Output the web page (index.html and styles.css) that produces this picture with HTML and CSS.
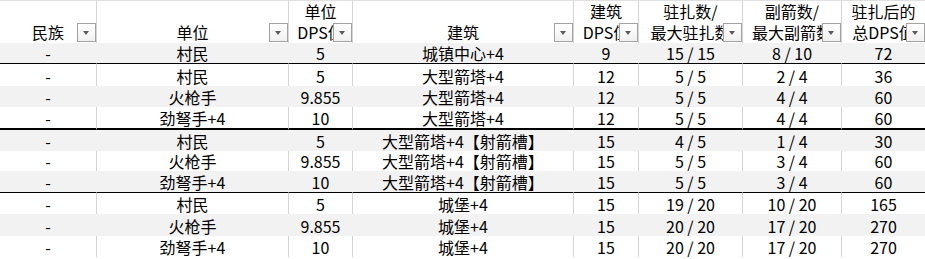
FILE: index.html
```html
<!DOCTYPE html>
<html lang="zh-CN">
<head>
<meta charset="utf-8">
<title>驻扎DPS表</title>
<link rel="stylesheet" href="styles.css">
</head>
<body>
<div class="sheet">
  <div class="row head">
    <div class="c"><span class="lbl">民族</span><span class="filter"></span></div>
    <div class="c"><span class="lbl">单位</span><span class="filter"></span></div>
    <div class="c"><span class="lbl">单位<br>DPS值</span><span class="filter"></span></div>
    <div class="c"><span class="lbl">建筑</span><span class="filter"></span></div>
    <div class="c"><span class="lbl">建筑<br>DPS值</span><span class="filter"></span></div>
    <div class="c"><span class="lbl">驻扎数/<br>最大驻扎数</span><span class="filter"></span></div>
    <div class="c"><span class="lbl">副箭数/<br>最大副箭数</span><span class="filter"></span></div>
    <div class="c"><span class="lbl">驻扎后的<br>总DPS值</span><span class="filter"></span></div>
  </div>
  <div class="row alt sep">
    <div class="c">-</div><div class="c">村民</div><div class="c">5</div><div class="c">城镇中心+4</div><div class="c">9</div><div class="c">15 / 15</div><div class="c">8 / 10</div><div class="c">72</div>
  </div>
  <div class="row">
    <div class="c">-</div><div class="c">村民</div><div class="c">5</div><div class="c">大型箭塔+4</div><div class="c">12</div><div class="c">5 / 5</div><div class="c">2 / 4</div><div class="c">36</div>
  </div>
  <div class="row alt">
    <div class="c">-</div><div class="c">火枪手</div><div class="c">9.855</div><div class="c">大型箭塔+4</div><div class="c">12</div><div class="c">5 / 5</div><div class="c">4 / 4</div><div class="c">60</div>
  </div>
  <div class="row sep2">
    <div class="c">-</div><div class="c">劲弩手+4</div><div class="c">10</div><div class="c">大型箭塔+4</div><div class="c">12</div><div class="c">5 / 5</div><div class="c">4 / 4</div><div class="c">60</div>
  </div>
  <div class="row alt">
    <div class="c">-</div><div class="c">村民</div><div class="c">5</div><div class="c">大型箭塔+4【射箭槽】</div><div class="c">15</div><div class="c">4 / 5</div><div class="c">1 / 4</div><div class="c">30</div>
  </div>
  <div class="row">
    <div class="c">-</div><div class="c">火枪手</div><div class="c">9.855</div><div class="c">大型箭塔+4【射箭槽】</div><div class="c">15</div><div class="c">5 / 5</div><div class="c">3 / 4</div><div class="c">60</div>
  </div>
  <div class="row alt sep">
    <div class="c">-</div><div class="c">劲弩手+4</div><div class="c">10</div><div class="c">大型箭塔+4【射箭槽】</div><div class="c">15</div><div class="c">5 / 5</div><div class="c">3 / 4</div><div class="c">60</div>
  </div>
  <div class="row">
    <div class="c">-</div><div class="c">村民</div><div class="c">5</div><div class="c">城堡+4</div><div class="c">15</div><div class="c">19 / 20</div><div class="c">10 / 20</div><div class="c">165</div>
  </div>
  <div class="row alt">
    <div class="c">-</div><div class="c">火枪手</div><div class="c">9.855</div><div class="c">城堡+4</div><div class="c">15</div><div class="c">20 / 20</div><div class="c">17 / 20</div><div class="c">270</div>
  </div>
  <div class="row">
    <div class="c">-</div><div class="c">劲弩手+4</div><div class="c">10</div><div class="c">城堡+4</div><div class="c">15</div><div class="c">20 / 20</div><div class="c">17 / 20</div><div class="c">270</div>
  </div>
</div>
</body>
</html>
```

FILE: styles.css
```css
html, body {
  margin: 0;
  padding: 0;
  background: #ffffff;
}

body {
  width: 925px;
  height: 259px;
  overflow: hidden;
  font-family: "Noto Sans CJK SC", "Noto Sans", sans-serif;
  font-size: 16px;
  color: #000000;
}

.sheet {
  display: grid;
  grid-template-columns: 97px 192px 64px 221px 65px 104px 99px 83px;
  grid-template-rows: 43px 21px 22px 21px 23px 21px 20px 22px 21px 22px 21px;
}

.row {
  display: contents;
}

.c {
  box-sizing: border-box;
  display: flex;
  align-items: flex-end;
  justify-content: center;
  border-right: 1px solid #d4d4d4;
  background: #ffffff;
  line-height: 19px;
  white-space: nowrap;
}

.c:last-child {
  border-right: none;
}

.head .c {
  position: relative;
  overflow: hidden;
  border-top: 1px solid #e0e0e0;
}

.lbl {
  display: block;
  text-align: center;
  line-height: 21px;
}

.alt .c {
  background: #f2f2f2;
  border-right-color: transparent;
}

.sep .c {
  border-bottom: 1px solid #000000;
}

.sep2 .c {
  border-bottom: 2px solid #000000;
}

.filter {
  position: absolute;
  right: 0;
  bottom: 1px;
  width: 19px;
  height: 19px;
  box-sizing: border-box;
  border: 1px solid #a3a3a3;
  background: linear-gradient(#ffffff, #f0f0f0);
}

.filter::after {
  content: "";
  position: absolute;
  left: 5px;
  top: 7px;
  border-left: 3.5px solid transparent;
  border-right: 3.5px solid transparent;
  border-top: 4px solid #5a5a5a;
}
```
